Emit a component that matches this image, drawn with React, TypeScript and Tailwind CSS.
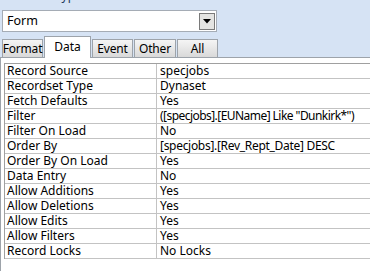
const rows: [string, string, string][] = [
  ["Record Source", "specjobs", ""],
  ["Recordset Type", "Dynaset", ""],
  ["Fetch Defaults", "Yes", ""],
  ["Filter", '([specjobs].[EUName] Like "Dunkirk*")', "tracking-[-0.55px]"],
  ["Filter On Load", "No", ""],
  ["Order By", "[specjobs].[Rev_Rept_Date] DESC", "tracking-[-0.3px]"],
  ["Order By On Load", "Yes", ""],
  ["Data Entry", "No", ""],
  ["Allow Additions", "Yes", ""],
  ["Allow Deletions", "Yes", ""],
  ["Allow Edits", "Yes", ""],
  ["Allow Filters", "Yes", ""],
  ["Record Locks", "No Locks", ""],
];

const tabs = ["Format", "Data", "Event", "Other", "All"];
const tabWidths: Record<string, string> = {
  Format: "w-[41px]",
  Data: "w-[47px]",
  Event: "w-[41px]",
  Other: "w-[42px]",
  All: "w-[41px]",
};

export default function App() {
  return (
    <div className="w-[370px] h-[271px] overflow-hidden bg-[#d6e3f4] text-[12px] text-black [font-family:'Noto_Sans',sans-serif] flex flex-col">
      {/* selection type caption, mostly scrolled off */}
      <div className="h-[15px] -mt-[12px] pl-[3px] leading-[15px] text-[#1e395b]">
        Selection type: Form
      </div>

      {/* object dropdown */}
      <div className="mt-[7px] ml-[2px] w-[215px] h-[22px] bg-white border border-[#a5acb5] flex items-center justify-between">
        <span className="pl-[4px] text-[12.5px]">Form</span>
        <div className="mr-[1px] w-[16px] h-[17px] bg-[#e4e4e2] border border-[#7a7a7a] flex items-center justify-center">
          <svg width="8" height="5" viewBox="0 0 8 5">
            <polygon points="0,0 8,0 4,4.5" fill="#000" />
          </svg>
        </div>
      </div>

      {/* tabs */}
      <div className="mt-[3px] pl-[2px] flex items-end gap-[1px] h-[22px] relative z-10">
        {tabs.map((t) =>
          t === "Data" ? (
            <div
              key={t}
              className={`${tabWidths[t]} h-[22px] -mb-px bg-white border border-b-0 border-[#9da3aa] flex items-start justify-center pt-[1px] text-[12px]`}
            >
              {t}
            </div>
          ) : (
            <div
              key={t}
              className={`${tabWidths[t]} h-[18px] bg-gradient-to-b from-[#f5f5f5] to-[#d9d9d9] border border-b-0 border-[#9da3aa] flex items-center justify-center text-[12px] tracking-[-0.2px]`}
            >
              {t}
            </div>
          )
        )}
      </div>

      {/* property page */}
      <div className="flex-1 bg-white border-t border-l border-[#9da3aa] pt-[5px] pl-[3px]">
        <div className="border-t border-l border-[#a0a0a0]">
          {rows.map(([label, value, fit]) => (
            <div key={label} className="flex h-[15px] border-b border-[#c3c3c3] leading-[14px]">
              <div className="w-[152px] shrink-0 border-r border-[#c3c3c3] pl-[2px] whitespace-nowrap">
                {label}
              </div>
              <div className={`pl-[3px] whitespace-nowrap ${fit}`}>{value}</div>
            </div>
          ))}
        </div>
      </div>
    </div>
  );
}
